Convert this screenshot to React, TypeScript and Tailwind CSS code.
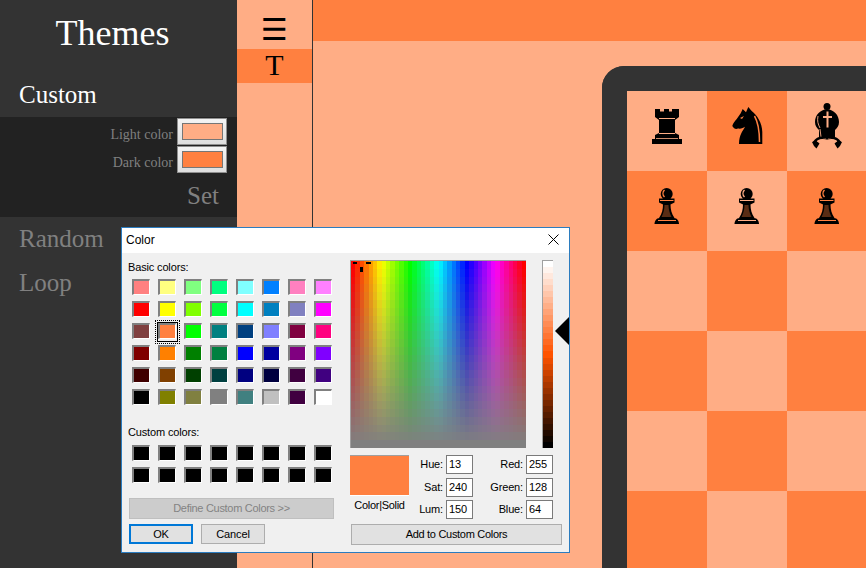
const LIGHT = '#ffad85'
const DARK = '#ff8040'

const basicColors = [
  '#ff8080', '#ffff80', '#80ff80', '#00ff80', '#80ffff', '#0080ff', '#ff80c0', '#ff80ff',
  '#ff0000', '#ffff00', '#80ff00', '#00ff40', '#00ffff', '#0080c0', '#8080c0', '#ff00ff',
  '#804040', '#ff8040', '#00ff00', '#008080', '#004080', '#8080ff', '#800040', '#ff0080',
  '#800000', '#ff8000', '#008000', '#008040', '#0000ff', '#0000a0', '#800080', '#8000ff',
  '#400000', '#804000', '#004000', '#004040', '#000080', '#000040', '#400040', '#400080',
  '#000000', '#808000', '#808040', '#808080', '#408080', '#c0c0c0', '#400040', '#ffffff',
]

function Rook() {
  return (
    <svg viewBox="0 0 80 80" className="h-20 w-20">
      <path d="M28 18h5v2.500h4V18h5v2.500h3V18h7v8l-4 3v13l4 2v4H28v-4l4-2V29l-4-3z" fill="#000" />
      <rect x="25" y="48" width="30" height="5" fill="#000" />
      <path d="M32 27.500h16M32 42.500h16" stroke={LIGHT} strokeWidth="1" />
      <path d="M29 47.500h22" stroke={LIGHT} strokeWidth="0.800" />
    </svg>
  )
}

function Knight() {
  return (
    <svg viewBox="0 0 80 80" className="h-20 w-20">
      <path
        d="M32 53C32 48 33 45 34 43C35 40 37 38 38 35.700C36 37 34 38 31 37.500C29 38.500 27 38 25.300 35C26 32 28 30 29.700 28L33.700 22.300L35.700 18L39 21.300L41.300 16L44.700 20C50 24 55.300 32 55.300 41V53Z"
        fill="#000"
      />
      <path d="M47.500 25C51 31 52.500 40 52.500 51" stroke={DARK} strokeWidth="1.500" fill="none" />
      <path d="M33 27l4-2-2 3z" fill={DARK} />
    </svg>
  )
}

function Bishop() {
  return (
    <svg viewBox="0 0 80 80" className="h-20 w-20">
      <circle cx="40" cy="15.500" r="3.500" fill="#000" />
      <path d="M40 18c7 1 12 6 12 13 0 4-2 6-4 8v8H32v-8c-2-2-4-4-4-8 0-7 5-12 12-13z" fill="#000" />
      <path d="M40.500 20.500v16M36 26h9" stroke={LIGHT} strokeWidth="2" fill="none" />
      <path d="M31 25c-1 5 0 8 2 12M33 38l1 8" stroke={LIGHT} strokeWidth="0.900" fill="none" />
      <path d="M40 47.500c-5-1.500-10-.5-13 4M40 47.500c5-1.500 10-.5 13 4" stroke="#000" strokeWidth="2.500" fill="none" />
      <path d="M25 51l4-1.500 3.500 3-3 5-2.500-2.500zM55 51l-4-1.500-3.500 3 3 5 2.500-2.500z" fill="#000" />
      <path d="M30 50.500c3-1.500 6-2.500 9-2.500M50 50.500c-3-1.500-6-2.500-9-2.500" stroke={LIGHT} strokeWidth="0.700" fill="none" />
    </svg>
  )
}

function Pawn({ bg }: { bg: string }) {
  return (
    <svg viewBox="0 0 80 80" className="h-20 w-20">
      <circle cx="39.700" cy="23" r="6" fill="#000" />
      <path d="M37.500 19c-2 2-2 5 0 7" stroke={bg} strokeWidth="1.400" fill="none" />
      <path d="M32 27.500h15.500v4l-4 2c0 5 1 9 4 13.500H32c3-4.500 4-8.500 4-13.500l-4-2z" fill="#000" />
      <path d="M33 29.500h13.500" stroke={bg} strokeWidth="1" fill="none" />
      <path d="M37.500 34c0 4-1 8-3 12h10c-2-4-3-8-3-12z" fill="#5a2c14" />
      <path d="M27.500 53c0-3 2-6 5-6h14.500c3 0 5 3 5 6z" fill="#000" />
      <path d="M31 49.500h18" stroke={bg} strokeWidth="1" />
    </svg>
  )
}

function Board() {
  const rows = [0, 1, 2, 3, 4, 5]
  const cols = [0, 1, 2, 3]
  return (
    <div className="ml-[289px] mt-[25px] w-[345px] rounded-tl-[22px] border-l-[25px] border-t-[25px] border-[#333333]">
      <div className="grid grid-cols-[repeat(4,80px)] grid-rows-[repeat(6,80px)]">
        {rows.map((r) =>
          cols.map((c) => {
            const isDark = (r + c) % 2 === 1
            return (
              <div key={`${r}-${c}`} className={isDark ? 'bg-[#ff8040]' : 'bg-[#ffad85]'}>
                {r === 0 && c === 0 && <Rook />}
                {r === 0 && c === 1 && <Knight />}
                {r === 0 && c === 2 && <Bishop />}
                {r === 1 && c < 3 && <Pawn bg={isDark ? DARK : LIGHT} />}
              </div>
            )
          })
        )}
      </div>
    </div>
  )
}

function ColorField({ label, color }: { label: string; color: string }) {
  return (
    <div className="flex h-[27px] items-center justify-end gap-1 pr-[10px]">
      <span className="pt-[6px] text-[14px] text-[#808080]">{label}</span>
      <div className="flex h-[27px] w-[50px] items-center justify-center border border-[#8f8f8f] bg-[linear-gradient(#f4f4f4,#dedede)]">
        <div className={`h-[17px] w-[41px] border border-[#767676] ${color}`} />
      </div>
    </div>
  )
}

function Sidebar() {
  return (
    <div className="w-[237px] shrink-0 bg-[#333333] font-['Liberation_Serif',serif]">
      <div className="h-[66px] w-[225px] pt-[13px] text-center text-[36px] leading-[41px] text-white">Themes</div>
      <div className="h-[51px] pl-[19px] pt-[14px] text-[25px] leading-[29px] text-white">Custom</div>
      <div className="flex h-[100px] flex-col gap-px bg-[#222222] pt-px">
        <ColorField label="Light color" color="bg-[#ffad85]" />
        <ColorField label="Dark color" color="bg-[#ff8040]" />
        <div className="pr-[18px] pt-[7px] text-right text-[25px] leading-[29px] text-[#808080]">Set</div>
      </div>
      <div className="h-[44px] pl-[19px] pt-[7px] text-[25px] leading-[29px] text-[#808080]">Random</div>
      <div className="h-[44px] pl-[19px] pt-[7px] text-[25px] leading-[29px] text-[#808080]">Loop</div>
    </div>
  )
}

function MenuColumn() {
  return (
    <div className="w-[76px] shrink-0 border-r border-[#333333] bg-[#ffad85] font-['Liberation_Serif',serif] text-black">
      <div className="flex h-[49px] items-center justify-center pt-[11px] font-['DejaVu_Sans',sans-serif] text-[30px] leading-none">☰</div>
      <div className="h-[34px] bg-[#ff8040] text-center text-[30px] leading-[32px]">T</div>
    </div>
  )
}

function Swatch({ color, selected }: { color: string; selected?: boolean }) {
  return (
    <div className="relative h-4 w-[18px] border-b border-l-2 border-r border-t-2 border-b-white border-l-[#808080] border-r-white border-t-[#808080]" style={{ backgroundColor: color }}>
      {selected && (
        <div className="absolute -left-[5px] -top-[5px] h-[24px] w-[25px] border border-dotted border-black p-px">
          <div className="h-full w-full border border-black" />
        </div>
      )}
    </div>
  )
}

function Spectrum() {
  const cols = Array.from({ length: 40 }, (_, i) => i)
  const rows = Array.from({ length: 24 }, (_, i) => i)
  return (
    <svg width="176" height="188" viewBox="0 0 176 188" shapeRendering="crispEdges" className="block border-l border-t border-[#a0a0a0]">
      {cols.map((c) =>
        rows.map((r) => (
          <rect
            key={`${c}-${r}`}
            x={(c * 176) / 40}
            y={(r * 188) / 24}
            width={176 / 40 + 1}
            height={188 / 24 + 1}
            fill={`hsl(${(c / 39) * 360} ${100 - (r / 23) * 100}% 50%)`}
          />
        ))
      )}
      <rect x="2" y="1" width="4" height="2" fill="#000" />
      <rect x="15" y="1" width="5" height="2" fill="#000" />
      <rect x="9" y="6" width="3" height="5" fill="#000" />
    </svg>
  )
}

function LumBar() {
  const steps = Array.from({ length: 31 }, (_, i) => i)
  return (
    <div className="flex h-[188px] w-[11px] flex-col border-l border-t border-[#a0a0a0]">
      {steps.map((s) => (
        <div key={s} className="flex-1" style={{ backgroundColor: `hsl(19.500 100% ${100 - (s / 30) * 100}%)` }} />
      ))}
    </div>
  )
}

function ValueField({ label, value }: { label: string; value: number }) {
  return (
    <div className="flex h-[19px] items-center justify-end gap-[3px]">
      <span>{label}:</span>
      <div className="flex h-[19px] w-[27px] items-center border border-[#7a7a7a] bg-white pl-[2px]">{value}</div>
    </div>
  )
}

function ColorDialog() {
  return (
    <div className="absolute left-[121px] top-[227px] h-[326px] w-[449px] overflow-hidden border border-[#2b7cbf] bg-[#f0f0f0] font-['Liberation_Sans',sans-serif] text-[11px] tracking-[-0.15px] text-black">
      <div className="flex h-[25px] items-center justify-between bg-white pb-[2px] pl-[4px] pr-[10px] text-[12px] tracking-normal">
        <span>Color</span>
        <svg width="11" height="11" viewBox="0 0 11 11" stroke="#000" fill="none">
          <path d="M0.500 0.500l10 10M10.500 0.500l-10 10" />
        </svg>
      </div>
      <div className="flex gap-4 pl-[6px]">
        <div className="w-[206px] pt-[7px]">
          <div className="h-[14px] leading-[14px]">Basic colors:</div>
          <div className="mt-[5px] grid grid-cols-[repeat(8,18px)] gap-x-2 gap-y-[6px] pl-1">
            {basicColors.map((color, i) => (
              <Swatch key={i} color={color} selected={i === 17} />
            ))}
          </div>
          <div className="mt-5 h-[14px] leading-[14px]">Custom colors:</div>
          <div className="mt-[6px] grid grid-cols-[repeat(8,18px)] gap-x-2 gap-y-[6px] pl-1">
            {Array.from({ length: 16 }, (_, i) => (
              <Swatch key={i} color="#000000" />
            ))}
          </div>
          <div className="ml-px mt-[15px] flex h-[21px] items-center justify-center border border-[#bfbfbf] bg-[#cccccc] tracking-[-0.3px] text-[#838383]">Define Custom Colors &gt;&gt;</div>
          <div className="ml-px mt-[5px] flex gap-2">
            <button className="h-5 w-16 border-2 border-[#0078d7] bg-[#e1e1e1]">OK</button>
            <button className="h-5 w-16 border border-[#adadad] bg-[#e1e1e1]">Cancel</button>
          </div>
        </div>
        <div className="w-[212px] pt-[7px]">
          <div className="relative flex gap-4">
            <Spectrum />
            <LumBar />
            <svg width="14" height="28" viewBox="0 0 14 28" className="absolute left-[205px] top-[57px]">
              <path d="M0 14L14 0v28z" fill="#000" />
            </svg>
          </div>
          <div className="mt-[7px] flex">
            <div className="w-[59px] shrink-0">
              <div className="h-[41px] border-b border-t border-b-white border-t-[#a0a0a0] bg-[#ff8040]" />
              <div className="mt-[2px] text-center leading-[14px] tracking-[-0.3px]">Color|Solid</div>
            </div>
            <div className="flex w-16 shrink-0 flex-col gap-[3.5px]">
              <ValueField label="Hue" value={13} />
              <ValueField label="Sat" value={240} />
              <ValueField label="Lum" value={150} />
            </div>
            <div className="flex w-20 shrink-0 flex-col gap-[3.5px]">
              <ValueField label="Red" value={255} />
              <ValueField label="Green" value={128} />
              <ValueField label="Blue" value={64} />
            </div>
          </div>
          <button className="ml-px mt-[5px] h-[21px] w-[211px] border border-[#adadad] bg-[#e1e1e1] tracking-[-0.3px]">Add to Custom Colors</button>
        </div>
      </div>
    </div>
  )
}

export default function App() {
  return (
    <div className="relative flex h-[568px] w-[866px] overflow-hidden">
      <Sidebar />
      <MenuColumn />
      <div className="flex-1 overflow-hidden bg-[#ffad85]">
        <div className="h-[41px] bg-[#ff8040]" />
        <Board />
      </div>
      <ColorDialog />
    </div>
  )
}
